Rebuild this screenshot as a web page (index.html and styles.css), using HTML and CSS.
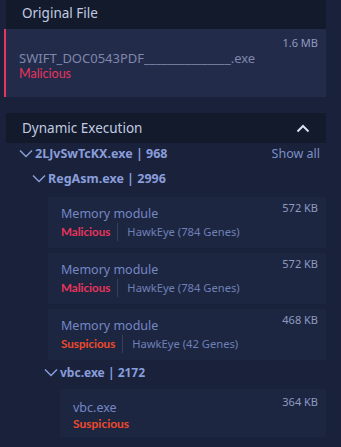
FILE: index.html
```html
<!DOCTYPE html>
<html lang="en">
<head>
    <meta charset="UTF-8">
    <meta name="viewport" content="width=device-width, initial-scale=1.0">
    <title>Sample report</title>
    <link rel="stylesheet" href="styles.css">
</head>
<body>
    <div class="panel">
        <div class="section-head first">
            <span>Original File</span>
        </div>
        <div class="file-card">
            <div class="top-row">
                <span class="file-name">SWIFT_DOC0543PDF_______________.exe</span>
                <span class="size">1.6 MB</span>
            </div>
            <div class="file-verdict malicious">Malicious</div>
        </div>

        <div class="section-head">
            <span>Dynamic Execution</span>
            <svg class="chev-up" width="14" height="9" viewBox="0 0 14 9">
                <polyline points="1.5,7.5 7,2 12.5,7.5" fill="none" stroke="#d8e0f2" stroke-width="2"/>
            </svg>
        </div>

        <div class="tree">
            <div class="node lvl0">
                <svg class="chev" width="14" height="9" viewBox="0 0 14 9">
                    <polyline points="1,1.5 7,7.5 13,1.5" fill="none" stroke="#8a9ddb" stroke-width="1.5"/>
                </svg>
                <span class="proc">2LJvSwTcKX.exe | 968</span>
                <span class="show-all">Show all</span>
            </div>
            <div class="node lvl1">
                <svg class="chev" width="14" height="9" viewBox="0 0 14 9">
                    <polyline points="1,1.5 7,7.5 13,1.5" fill="none" stroke="#8a9ddb" stroke-width="1.5"/>
                </svg>
                <span class="proc">RegAsm.exe | 2996</span>
            </div>

            <div class="module lvl1-card">
                <div class="top-row">
                    <span class="mod-name">Memory module</span>
                    <span class="size">572 KB</span>
                </div>
                <div class="meta">
                    <span class="verdict malicious">Malicious</span>
                    <span class="sep"></span>
                    <span class="engine">HawkEye (784 Genes)</span>
                </div>
            </div>
            <div class="module lvl1-card">
                <div class="top-row">
                    <span class="mod-name">Memory module</span>
                    <span class="size">572 KB</span>
                </div>
                <div class="meta">
                    <span class="verdict malicious">Malicious</span>
                    <span class="sep"></span>
                    <span class="engine">HawkEye (784 Genes)</span>
                </div>
            </div>
            <div class="module lvl1-card">
                <div class="top-row">
                    <span class="mod-name">Memory module</span>
                    <span class="size">468 KB</span>
                </div>
                <div class="meta">
                    <span class="verdict suspicious">Suspicious</span>
                    <span class="sep"></span>
                    <span class="engine">HawkEye (42 Genes)</span>
                </div>
            </div>

            <div class="node lvl2">
                <svg class="chev" width="14" height="9" viewBox="0 0 14 9">
                    <polyline points="1,1.5 7,7.5 13,1.5" fill="none" stroke="#8a9ddb" stroke-width="1.5"/>
                </svg>
                <span class="proc">vbc.exe | 2172</span>
            </div>
            <div class="module lvl2-card">
                <div class="top-row">
                    <span class="mod-name">vbc.exe</span>
                    <span class="size">364 KB</span>
                </div>
                <div class="verdict suspicious">Suspicious</div>
            </div>
        </div>
    </div>
</body>
</html>
```

FILE: styles.css
```css
body {
    margin: 0;
    background-color: #19223a;
    font-family: "Noto Sans", "Open Sans", sans-serif;
    font-size: 12px;
}

.panel {
    width: 322px;
    margin-left: 4px;
}

.section-head {
    display: flex;
    justify-content: space-between;
    align-items: center;
    height: 30px;
    margin-left: 2px;
    margin-top: 16px;
    padding: 0 16px 0 16px;
    background-color: #121a2c;
    color: #c3cbe0;
    font-size: 13.5px;
}

.section-head.first {
    height: 29px;
    margin-top: 0;
    padding-bottom: 4px;
    box-sizing: border-box;
}

.file-card {
    height: 68px;
    box-sizing: border-box;
    padding: 6px 8px 0 13px;
    background-color: #232b4b;
    border-left: 2px solid #e9345b;
    line-height: 16px;
}

.top-row {
    display: flex;
    justify-content: space-between;
    align-items: flex-start;
}

.file-name {
    margin-top: 15px;
    color: #7f88ab;
    font-size: 13px;
}

.file-verdict {
    font-family: Lato, "Noto Sans", sans-serif;
    font-size: 12.5px;
}

.size {
    color: #8f9ac0;
    font-size: 11px;
    line-height: 16px;
}

.verdict {
    font-family: Lato, "Noto Sans", sans-serif;
    font-weight: bold;
    font-size: 11.6px;
}

.malicious {
    color: #e9345b;
}

.suspicious {
    color: #f04a2c;
}

.node {
    display: flex;
    align-items: center;
    height: 24px;
    color: #8a9ddb;
    font-weight: bold;
    font-size: 12.5px;
}

.node .chev {
    margin-right: 2px;
}

.lvl0 {
    height: 20px;
    padding-left: 15px;
    padding-right: 6px;
}

.lvl1 {
    margin-top: 3px;
    padding-left: 28px;
}

.lvl2 {
    margin-top: -5px;
    padding-left: 40px;
    font-size: 12px;
}

.show-all {
    margin-left: auto;
    font-weight: normal;
    color: #7d8fc8;
}

.module {
    margin-bottom: 5px;
    padding: 3px 8px 7px 13px;
    background-color: #1d2641;
    line-height: 18px;
}

.lvl1-card {
    margin-left: 44px;
}

.lvl1 + .lvl1-card {
    margin-top: 7px;
}

.lvl2-card {
    margin-left: 56px;
    margin-top: 5px;
    padding-top: 5px;
    padding-bottom: 5px;
    line-height: 16px;
}

.lvl2-card .verdict {
    font-size: 12px;
}

.mod-name {
    margin-top: 5px;
    color: #7587c5;
    font-size: 12.5px;
}

.lvl2-card .mod-name {
    margin-top: 6px;
}

.meta {
    display: flex;
    align-items: center;
}

.sep {
    width: 1px;
    height: 18px;
    margin: 0 9px 0 7px;
    background-color: #34405e;
}

.engine {
    color: #6f80b8;
    font-size: 11.2px;
}
```
